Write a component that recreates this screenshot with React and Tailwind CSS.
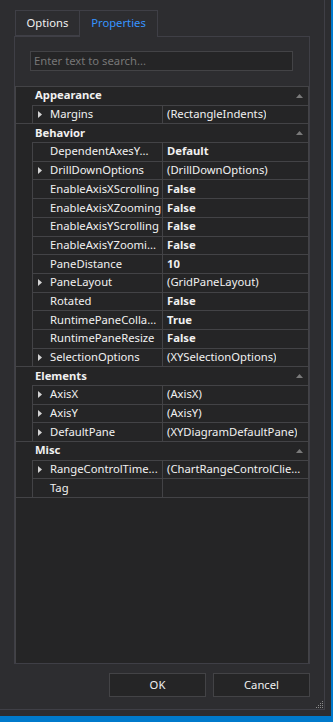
import React from 'react';

const groups = [
  { name: 'Appearance', rows: [{ n: 'Margins', v: '(RectangleIndents)', exp: true }] },
  {
    name: 'Behavior',
    rows: [
      { n: 'DependentAxesY...', v: 'Default', b: true },
      { n: 'DrillDownOptions', v: '(DrillDownOptions)', exp: true },
      { n: 'EnableAxisXScrolling', v: 'False', b: true },
      { n: 'EnableAxisXZooming', v: 'False', b: true },
      { n: 'EnableAxisYScrolling', v: 'False', b: true },
      { n: 'EnableAxisYZoomi...', v: 'False', b: true },
      { n: 'PaneDistance', v: '10', b: true },
      { n: 'PaneLayout', v: '(GridPaneLayout)', exp: true },
      { n: 'Rotated', v: 'False', b: true },
      { n: 'RuntimePaneColla...', v: 'True', b: true },
      { n: 'RuntimePaneResize', v: 'False', b: true },
      { n: 'SelectionOptions', v: '(XYSelectionOptions)', exp: true },
    ],
  },
  {
    name: 'Elements',
    rows: [
      { n: 'AxisX', v: '(AxisX)', exp: true },
      { n: 'AxisY', v: '(AxisY)', exp: true },
      { n: 'DefaultPane', v: '(XYDiagramDefaultPane)', exp: true },
    ],
  },
  {
    name: 'Misc',
    rows: [
      { n: 'RangeControlTime...', v: '(ChartRangeControlClie...', exp: true },
      { n: 'Tag', v: '' },
    ],
  },
];

function ExpandArrow() {
  return (
    <svg width="4" height="7" viewBox="0 0 4 7" className="shrink-0">
      <polygon points="0,0 4,3.5 0,7" fill="#d4d4d4" />
    </svg>
  );
}

function CollapseArrow() {
  return (
    <svg width="7" height="4" viewBox="0 0 7 4">
      <polygon points="0,4 3.5,0 7,4" fill="#7a7a7a" />
    </svg>
  );
}

function Grip() {
  const dots = [];
  for (let r = 0; r < 4; r++) {
    for (let c = 0; c < 4; c++) {
      if (r + c >= 3) dots.push(<rect key={`${r}-${c}`} x={c * 2} y={r * 2} width="1" height="1" fill="#8a8a8a" />);
    }
  }
  return (
    <svg width="7" height="7" viewBox="0 0 7 7">
      {dots}
    </svg>
  );
}

function Row({ row }) {
  return (
    <div className="flex h-[18.7px]">
      <div className="w-[16px] shrink-0" />
      <div className="flex flex-1 min-w-0 border-l border-t border-[#434346]">
        <div className="flex items-center w-[130px] shrink-0 border-r border-[#434346] pl-[5px] overflow-hidden whitespace-nowrap">
          <div className="w-[12px] shrink-0 flex items-center">{row.exp && <ExpandArrow />}</div>
          <span>{row.n}</span>
        </div>
        <div className={`flex items-center pl-[4px] overflow-hidden whitespace-nowrap ${row.b ? 'font-bold' : ''}`}>
          {row.v}
        </div>
      </div>
    </div>
  );
}

export default function App() {
  return (
    <div className="w-[333px] h-[722px] bg-[#2d2d30] border-r-2 border-b-[6px] border-[#007acc] overflow-hidden font-['Noto_Sans',sans-serif] text-[11.25px] text-[#f1f1f1]">
      <div className="relative w-[325px] h-[710px] border-r border-b border-[#3f3f46] flex flex-col">
        {/* Tabs */}
        <div className="flex mt-[10px] ml-[15px] h-[26px] relative z-10">
          <div className="w-[64px] border-t border-l border-b border-[#3f3f46] flex items-center justify-center">Options</div>
          <div className="w-[79px] h-[27px] border-t border-l border-r border-[#3f3f46] bg-[#2d2d30] flex items-center justify-center pb-[1px] text-[#3794ff]">
            Properties
          </div>
        </div>

        {/* Panel */}
        <div className="ml-[14px] w-[296px] h-[628px] border border-[#3f3f46] flex flex-col">
          <div className="mt-[14px] ml-[15px] w-[263px] h-[20px] border border-[#434346] bg-[#252526] flex items-center pl-[3px] text-[#777777]">
            Enter text to search...
          </div>
          <div className="mt-[15px] flex-1 border-l border-r border-[#434346] bg-[#252526] flex flex-col">
            {groups.map(g => (
              <div key={g.name}>
                <div className="flex items-center justify-between h-[18.7px] border-t border-[#434346] pl-[19px] pr-[5px] font-bold">
                  <span>{g.name}</span>
                  <CollapseArrow />
                </div>
                {g.rows.map(r => (
                  <Row key={r.n} row={r} />
                ))}
              </div>
            ))}
            <div className="border-t border-[#434346]" />
          </div>
        </div>

        {/* Buttons */}
        <div className="ml-[14px] w-[296px] mt-[9px] flex justify-end gap-[7px]">
          <button className="w-[97px] h-[24px] border border-[#434346] bg-[#252526] text-[#f1f1f1] flex items-center justify-center">OK</button>
          <button className="w-[97px] h-[24px] border border-[#434346] bg-[#252526] text-[#f1f1f1] flex items-center justify-center">Cancel</button>
        </div>

        <div className="absolute right-[1px] bottom-[1px]">
          <Grip />
        </div>
      </div>
    </div>
  );
}
